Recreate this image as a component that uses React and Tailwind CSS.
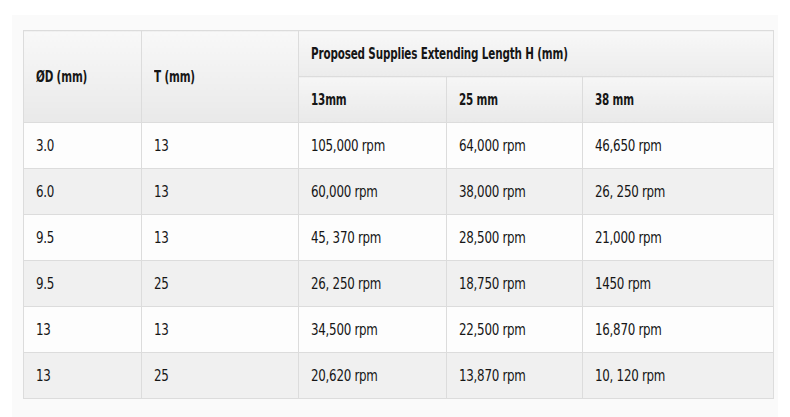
import React from 'react';

const rows = [
  ['3.0', '13', '105,000 rpm', '64,000 rpm', '46,650 rpm'],
  ['6.0', '13', '60,000 rpm', '38,000 rpm', '26, 250 rpm'],
  ['9.5', '13', '45, 370 rpm', '28,500 rpm', '21,000 rpm'],
  ['9.5', '25', '26, 250 rpm', '18,750 rpm', '1450 rpm'],
  ['13', '13', '34,500 rpm', '22,500 rpm', '16,870 rpm'],
  ['13', '25', '20,620 rpm', '13,870 rpm', '10, 120 rpm'],
];

const font = { fontFamily: '"DejaVu Sans Condensed", "DejaVu Sans", sans-serif', fontStretch: 'condensed' };

// condensed label: the reference face is narrower than anything installed
function Head({ children }) {
  return <span className="inline-block origin-left scale-x-[0.77] whitespace-nowrap text-[15px] font-bold tracking-[-0.2px]">{children}</span>;
}

function Cell({ children }) {
  return <span className="inline-block origin-left scale-x-[0.88] whitespace-nowrap text-[15px] tracking-[-0.3px]">{children}</span>;
}

const th = 'border border-[#dcdcdc] text-left px-3 align-middle font-bold';

export default function App() {
  return (
    <div className="w-[790px] h-[417px] bg-white overflow-hidden pl-[12px] pt-[15px]" style={font}>
      <div className="w-[766px] h-[402px] bg-[#fafafa] pl-[11px] pt-[15px]">
        <table className="border-collapse text-[#161616]">
          <colgroup>
            <col className="w-[118px]" />
            <col className="w-[157px]" />
            <col className="w-[148px]" />
            <col className="w-[136px]" />
            <col className="w-[191px]" />
          </colgroup>
          <thead>
            <tr className="h-[46px]">
              <th rowSpan={2} className={`${th} bg-gradient-to-b from-[#f8f8f8] to-[#e9e9e9]`}><Head>ØD (mm)</Head></th>
              <th rowSpan={2} className={`${th} bg-gradient-to-b from-[#f8f8f8] to-[#e9e9e9]`}><Head>T (mm)</Head></th>
              <th colSpan={3} className={`${th} bg-gradient-to-b from-[#f8f8f8] to-[#ececec]`}><Head>Proposed Supplies Extending Length H (mm)</Head></th>
            </tr>
            <tr className="h-[46px]">
              <th className={`${th} bg-gradient-to-b from-[#f6f6f6] to-[#e9e9e9]`}><Head>13mm</Head></th>
              <th className={`${th} bg-gradient-to-b from-[#f6f6f6] to-[#e9e9e9]`}><Head>25 mm</Head></th>
              <th className={`${th} bg-gradient-to-b from-[#f6f6f6] to-[#e9e9e9]`}><Head>38 mm</Head></th>
            </tr>
          </thead>
          <tbody>
            {rows.map((r, i) => (
              <tr key={i} className={`h-[46px] ${i % 2 === 0 ? 'bg-[#fdfdfd]' : 'bg-[#f0f0f0]'}`}>
                {r.map((c, j) => (
                  <td key={j} className="border border-[#dcdcdc] px-3"><Cell>{c}</Cell></td>
                ))}
              </tr>
            ))}
          </tbody>
        </table>
      </div>
    </div>
  );
}
